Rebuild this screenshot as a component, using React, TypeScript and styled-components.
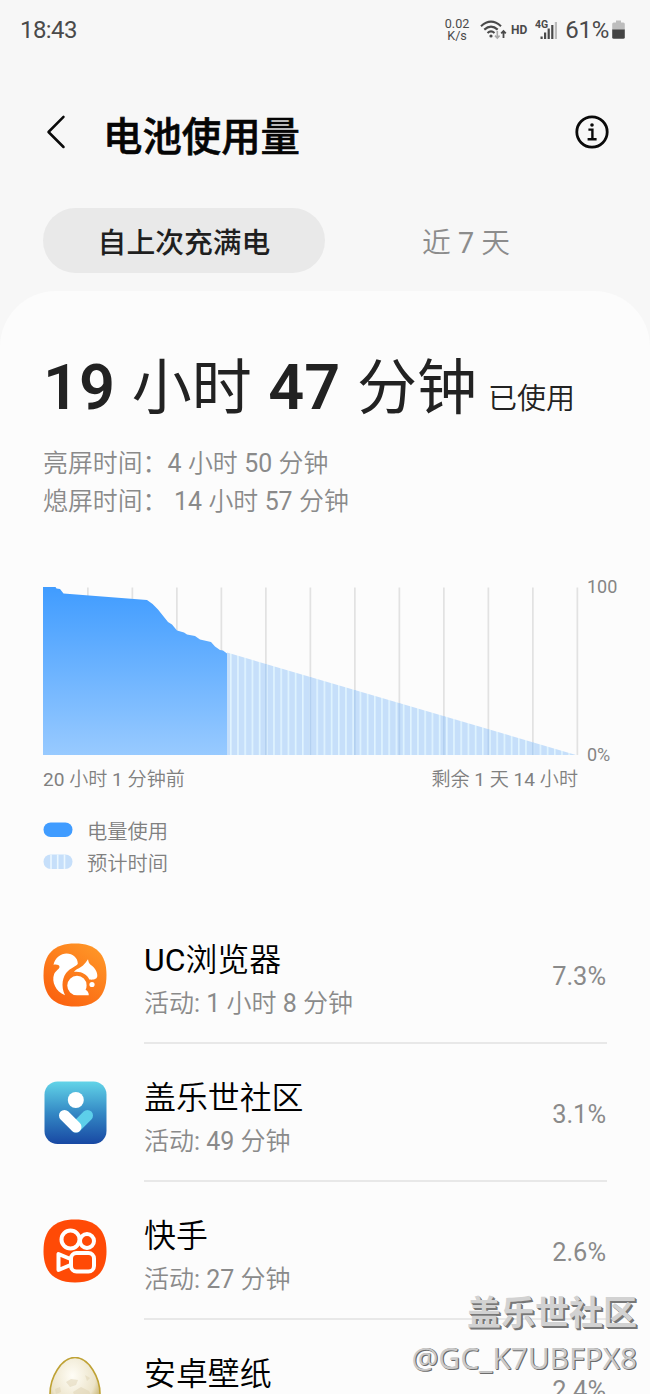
import React from "react";
import styled, { createGlobalStyle } from "styled-components";

const GlobalStyle = createGlobalStyle`
  * { box-sizing: border-box; }
  body {
    margin: 0;
    background: #f7f7f7;
    font-family: Roboto, "Noto Sans CJK SC DemiLight", "Noto Sans CJK SC", sans-serif;
  }
`;

const Screen = styled.div`
  width: 650px;
  height: 1394px;
  overflow: hidden;
  position: relative;
  display: flex;
  flex-direction: column;
  background: #f7f7f7;
`;

const StatusBar = styled.header`
  height: 60px;
  flex: none;
  display: flex;
  align-items: center;
  justify-content: space-between;
  padding: 0 25px 0 20px;
  color: #4a4a4a;
`;

const Clock = styled.span`
  font-size: 24px;
  line-height: 28px;
  letter-spacing: -0.6px;
`;

const StatusIcons = styled.div`
  display: flex;
  align-items: center;
`;

const NetSpeed = styled.div`
  width: 26px;
  display: flex;
  flex-direction: column;
  align-items: center;
  font-size: 12.6px;
  line-height: 12px;
  margin-right: 9px;
`;

const HdMark = styled.span`
  font-size: 12px;
  font-weight: 700;
  line-height: 14px;
  margin: 0 8px 0 4px;
`;

const BatteryText = styled.span`
  font-size: 24px;
  line-height: 28px;
  letter-spacing: -0.3px;
  margin: 0 3px 0 6px;
`;

const TitleBar = styled.div`
  height: 148px;
  flex: none;
  display: flex;
  align-items: center;
  padding: 0 40px 4px 46px;
`;

const Title = styled.h1`
  flex: 1;
  margin: 0 0 0 37px;
  padding-top: 4px;
  font-family: "Noto Sans CJK SC", sans-serif;
  font-size: 39.4px;
  line-height: 56px;
  font-weight: 500;
  -webkit-text-stroke: 0.6px #050505;
  color: #050505;
`;

const Tabs = styled.nav`
  height: 65px;
  flex: none;
  display: flex;
  padding: 0 43px;
`;

const Tab = styled.div<{ $active?: boolean }>`
  flex: 1;
  display: flex;
  align-items: center;
  justify-content: center;
  border-radius: 33px;
  font-size: 28.8px;
  ${(p) => p.$active && 'font-family: "Noto Sans CJK SC", sans-serif;'}
  font-weight: ${(p) => (p.$active ? 500 : 400)};
  color: ${(p) => (p.$active ? "#1f1f1f" : "#8c8c8c")};
  background: ${(p) => (p.$active ? "#e9e9e9" : "transparent")};
`;

const Panel = styled.main`
  flex: none;
  height: 1140px;
  margin-top: 18px;
  padding: 52px 43px 0;
  border-radius: 56px 56px 0 0;
  background: #fcfcfc;
`;

const Total = styled.div`
  height: 90px;
  display: flex;
  align-items: baseline;
  white-space: pre;
  color: #222;
  font-family: Roboto, "Noto Sans CJK SC", sans-serif;
  font-size: 60px;
  line-height: 90px;
  word-spacing: 1.8px;
`;

const Digits = styled.b`
  font-size: 63px;
  font-weight: 600;
`;

const Used = styled.span`
  font-size: 29px;
  font-weight: 350;
  margin-left: 11px;
`;

const Times = styled.div`
  margin-top: 12px;
  font-size: 24.9px;
  line-height: 38px;
  word-spacing: 0.3px;
  color: #8a8a8a;
  white-space: pre;
`;

const ChartRow = styled.div`
  display: flex;
  margin-top: 66px;
  height: 170px;
`;

const Axis = styled.div`
  display: flex;
  flex-direction: column;
  justify-content: space-between;
  margin: -11px 0 -9px 8px;
  font-size: 18px;
  line-height: 22px;
  color: #858585;
`;

const Range = styled.div`
  width: 535px;
  display: flex;
  justify-content: space-between;
  margin-top: 9px;
  font-size: 19.1px;
  line-height: 28px;
  color: #808080;
`;

const Legend = styled.div`
  margin-top: 22px;
  display: flex;
  flex-direction: column;
`;

const LegendItem = styled.div`
  height: 32px;
  display: flex;
  align-items: center;
  gap: 14px;
  font-size: 20.3px;
  line-height: 32px;
  color: #808080;

  svg {
    margin-bottom: 4px;
  }
`;

const AppList = styled.ul`
  list-style: none;
  margin: 26px 0 0;
  padding: 0;
`;

const AppRow = styled.li`
  height: 138px;
  display: flex;
  align-items: center;
`;

const AppBody = styled.div`
  flex: 1;
  height: 138px;
  margin-left: 37px;
  display: flex;
  align-items: center;
  justify-content: space-between;
  border-bottom: 2px solid #e8e8e8;
  padding: 4px 1px 0 0;
`;

const AppText = styled.div`
  padding-top: 11px;
`;

const AppName = styled.div`
  font-size: 31.9px;
  line-height: 43px;
  color: #000;
`;

const AppActivity = styled.div`
  font-size: 25px;
  line-height: 43px;
  color: #8a8a8a;
`;

const Percent = styled.span`
  font-size: 25.4px;
  color: #8a8a8a;
`;

const Watermark = styled.div`
  position: absolute;
  right: 13px;
  top: 1288px;
  text-align: right;
  color: #d2d2d2;
`;

const WatermarkName = styled.div`
  font-family: "Noto Sans CJK SC", sans-serif;
  font-size: 34px;
  line-height: 46px;
  font-weight: 700;
  text-shadow: 1px 1px 0 #777, 2px 2px 0 #777;
`;

const WatermarkUser = styled.div`
  font-family: "Open Sans", sans-serif;
  font-size: 30px;
  line-height: 48px;
  color: #cacaca;
  text-shadow: 1px 1px 0 #6c6c6c, 1px 0 0 #777;
`;

const WifiIcon = () => (
  <svg width="28" height="24" viewBox="0 0 28 24" fill="none" stroke="#4a4a4a" strokeWidth="2.1">
    <path d="M2 8.2Q12 -0.8 22 8.2" />
    <path d="M5.3 11.6Q12 5.6 18.7 11.6" />
    <path d="M8.5 15Q12 11.8 15.5 15" />
    <circle cx="12" cy="18" r="1.6" fill="#4a4a4a" stroke="none" />
    <path d="M18.3 13v7M16 17.6l2.3 2.4 2.3-2.4" stroke="#aaa" strokeWidth="1.6" />
    <path d="M24.5 20v-7M22.2 15.4l2.3-2.4 2.3 2.4" strokeWidth="1.8" />
  </svg>
);

const SignalIcon = () => (
  <svg width="24" height="24" viewBox="0 0 24 24" fill="#4a4a4a">
    <text x="0" y="9.5" fontSize="10.5" fontWeight="700" fontFamily="Roboto, sans-serif">4G</text>
    <rect x="5.5" y="18.5" width="2.2" height="2.5" />
    <rect x="9" y="14.5" width="2.2" height="6.5" />
    <rect x="12.6" y="10.5" width="2.2" height="10.5" />
    <rect x="16.2" y="7" width="2.2" height="14" />
    <rect x="19.8" y="4" width="2.2" height="17" fill="#bcbcbc" />
  </svg>
);

const BatteryIcon = () => (
  <svg width="13" height="20" viewBox="0 0 13 20">
    <path d="M4 0.5h5v2h2.3a1.5 1.5 0 0 1 1.5 1.5V10H.2V4a1.5 1.5 0 0 1 1.5-1.5H4z" fill="#bdbdbd" />
    <path d="M.2 9.5h12.6v7.7a1.6 1.6 0 0 1-1.6 1.6H1.8a1.6 1.6 0 0 1-1.6-1.6z" fill="#444" />
  </svg>
);

const BackIcon = () => (
  <svg width="20" height="36" viewBox="0 0 20 36" fill="none" stroke="#0a0a0a" strokeWidth="2.5" strokeLinecap="round" strokeLinejoin="round">
    <path d="M17.5 2.8L2.5 18l15 15" />
  </svg>
);

const InfoIcon = () => (
  <svg width="36" height="36" viewBox="0 0 36 36" fill="none" stroke="#0a0a0a" strokeWidth="2.8">
    <circle cx="18" cy="18" r="15.2" />
    <path d="M14.4 15.6h4V25M13.6 25.2h9" strokeWidth="2.4" />
    <circle cx="18" cy="11" r="1.8" fill="#0a0a0a" stroke="none" />
  </svg>
);

const ChartSvg = styled.svg`
  flex: none;
`;

const gridXs = Array.from({ length: 12 }, (_, i) => 45 + i * 44.5);

const BatteryChart = () => (
  <ChartSvg width="536" height="170" viewBox="0 0 536 170">
    <defs>
      <linearGradient id="used" x1="0" y1="0" x2="0" y2="1">
        <stop offset="0" stopColor="#409cff" />
        <stop offset="1" stopColor="#98caff" />
      </linearGradient>
      <pattern id="stripes" x="187" width="7.2" height="170" patternUnits="userSpaceOnUse">
        <rect width="7.2" height="170" fill="#c6dffa" />
        <rect width="1.6" height="170" fill="#e0f4ff" />
      </pattern>
    </defs>
    {gridXs.map((x) => (
      <rect key={x} x={x - 1} y="0.5" width="1.7" height="167.5" fill="#e2e2e2" />
    ))}
    <path d="M184 65.5L533 168H184z" fill="url(#stripes)" />
    {gridXs.slice(4, 11).map((x) => (
      <rect key={x} x={x - 1} y={65.5 + (x - 184) * 0.2937} width="1.7" height={102.5 - (x - 184) * 0.2937} fill="#b3d0f0" />
    ))}
    <path
      d="M0 0H12.5L13.5 1.5L17 2L20.5 6.5L104 13Q110 16.5 115 22.5L125 35L129 37.5L134 43.5L141 45.5L144 47.5L152 49L157 52.5L168 55L172 59.5L177 63L180 63.5L184 66.5V168H0z"
      fill="url(#used)"
    />
  </ChartSvg>
);

const UsedSwatch = () => (
  <svg width="30" height="16" viewBox="0 0 30 16">
    <rect x="0.5" y="0.5" width="29" height="14.5" rx="7.2" fill="#409cff" />
  </svg>
);

const ForecastSwatch = () => (
  <svg width="30" height="16" viewBox="0 0 30 16">
    <rect x="0.5" y="0.5" width="29" height="14.5" rx="7.2" fill="#c6dffa" />
    <path d="M8 .5V15M14.7 .5V15M21.5 .5V15" stroke="#eaf7ff" strokeWidth="1.6" />
  </svg>
);

const squircle = "M32 0.5C53 0.5 63.5 11 63.5 32S53 63.5 32 63.5 0.5 53 0.5 32 11 0.5 32 0.5z";

const UcIcon = () => (
  <svg width="64" height="64" viewBox="0 0 64 64">
    <defs>
      <linearGradient id="uc" x1="1" y1="0" x2="0.3" y2="1">
        <stop offset="0" stopColor="#ff9c2a" />
        <stop offset="1" stopColor="#fb6310" />
      </linearGradient>
    </defs>
    <path d={squircle} fill="url(#uc)" />
    <path
      d="M22 52.3C12.500 48.500 8.500 38.500 11 31.500C12.500 27.500 16.500 26.500 16.500 23.800C16.500 21.800 13 21 10.500 21.800C12 14.500 18 10.500 23.500 10.500C30 10.500 34.800 15 34.800 20.500C34.500 22.500 29.500 24 25 28C19.500 33 17.500 43 22 52.300z"
      fill="#fff"
    />
    <path
      d="M31 29C33.500 25.500 37.500 25 40 22.500C42 20.500 43.500 18.500 45 16.300C45.500 19 46 20.500 47.300 21.500C52 24.500 54.500 29 54.300 33C54 36.500 50 37 46.300 36.500C44 31.500 38 28 31 29z"
      fill="#fff"
    />
    <path d="M34 32.800a9.600 9.600 0 0 1 9.600 9.600q0 2.400-1 4.300q3.200 1.800 3.200 5.600H34a9.700 9.700 0 0 1 0-19.500z" fill="#fff" />
    <circle cx="49" cy="41.500" r="2.600" fill="#fff" />
  </svg>
);

const CommunityIcon = () => (
  <svg width="64" height="64" viewBox="0 0 64 64">
    <defs>
      <linearGradient id="community" x1="0" y1="0" x2="0" y2="1">
        <stop offset="0" stopColor="#62d4e8" />
        <stop offset="0.5" stopColor="#3489c5" />
        <stop offset="1" stopColor="#1848a3" />
      </linearGradient>
    </defs>
    <rect x="1.5" y="0.5" width="62" height="62.5" rx="13" fill="url(#community)" />
    <circle cx="32.8" cy="19" r="8" fill="#fff" />
    <path d="M33 46L44.5 34.5" stroke="#5dcfea" strokeWidth="11" strokeLinecap="round" />
    <path d="M21.5 34.5L33 46" stroke="#fff" strokeWidth="11" strokeLinecap="round" />
  </svg>
);

const KuaishouIcon = () => (
  <svg width="64" height="64" viewBox="0 0 64 64" fill="none" stroke="#fff" strokeWidth="4">
    <path d={squircle} fill="#ff4a06" stroke="none" />
    <circle cx="27.5" cy="20.5" r="9" />
    <circle cx="44" cy="22" r="7" />
    <rect x="28" y="34" width="23" height="18.5" rx="5.5" />
    <path d="M27.500 40L15.500 35V51L27.500 46" strokeLinejoin="round" />
  </svg>
);

const EggIcon = () => (
  <svg width="64" height="64" viewBox="0 0 64 64">
    <defs>
      <radialGradient id="egg" cx="0.45" cy="0.3" r="0.65">
        <stop offset="0" stopColor="#fffdf6" />
        <stop offset="0.7" stopColor="#ece4ca" />
        <stop offset="1" stopColor="#c5b068" />
      </radialGradient>
    </defs>
    <path d="M32 0.5C46 0.5 57 21 57 37S46 62 32 62 7 53 7 37 18 0.5 32 0.5z" fill="url(#egg)" stroke="#bfa235" strokeWidth="1.6" />
    <path d="M23 25l5-3 7 1-2 5-6 2zM42 18l5 3-3 3zM30 35l8-5 8 4 4 8H33zM12 32l5-2 1 5-5 2z" fill="#ddd1b2" opacity="0.5" />
  </svg>
);

const apps = [
  { name: "UC浏览器", activity: "活动: 1 小时 8 分钟", percent: "7.3%", Icon: UcIcon },
  { name: "盖乐世社区", activity: "活动: 49 分钟", percent: "3.1%", Icon: CommunityIcon },
  { name: "快手", activity: "活动: 27 分钟", percent: "2.6%", Icon: KuaishouIcon },
  { name: "安卓壁纸", activity: "", percent: "2.4%", Icon: EggIcon },
];

export default function App() {
  return (
    <>
      <GlobalStyle />
      <Screen>
        <StatusBar>
          <Clock>18:43</Clock>
          <StatusIcons>
            <NetSpeed>
              <span>0.02</span>
              <span>K/s</span>
            </NetSpeed>
            <WifiIcon />
            <HdMark>HD</HdMark>
            <SignalIcon />
            <BatteryText>61%</BatteryText>
            <BatteryIcon />
          </StatusIcons>
        </StatusBar>
        <TitleBar>
          <BackIcon />
          <Title>电池使用量</Title>
          <InfoIcon />
        </TitleBar>
        <Tabs>
          <Tab $active>自上次充满电</Tab>
          <Tab>近 7 天</Tab>
        </Tabs>
        <Panel>
          <Total>
            <Digits>19</Digits> 小时 <Digits>47</Digits> 分钟<Used>已使用</Used>
          </Total>
          <Times>
            <div>亮屏时间：4 小时 50 分钟</div>
            <div>熄屏时间： 14 小时 57 分钟</div>
          </Times>
          <ChartRow>
            <BatteryChart />
            <Axis>
              <span>100</span>
              <span>0%</span>
            </Axis>
          </ChartRow>
          <Range>
            <span>20 小时 1 分钟前</span>
            <span>剩余 1 天 14 小时</span>
          </Range>
          <Legend>
            <LegendItem><UsedSwatch />电量使用</LegendItem>
            <LegendItem><ForecastSwatch />预计时间</LegendItem>
          </Legend>
          <AppList>
            {apps.map(({ name, activity, percent, Icon }) => (
              <AppRow key={name}>
                <Icon />
                <AppBody>
                  <AppText>
                    <AppName>{name}</AppName>
                    <AppActivity>{activity || "\u00a0"}</AppActivity>
                  </AppText>
                  <Percent>{percent}</Percent>
                </AppBody>
              </AppRow>
            ))}
          </AppList>
        </Panel>
        <Watermark>
          <WatermarkName>盖乐世社区</WatermarkName>
          <WatermarkUser>@GC_K7UBFPX8</WatermarkUser>
        </Watermark>
      </Screen>
    </>
  );
}
